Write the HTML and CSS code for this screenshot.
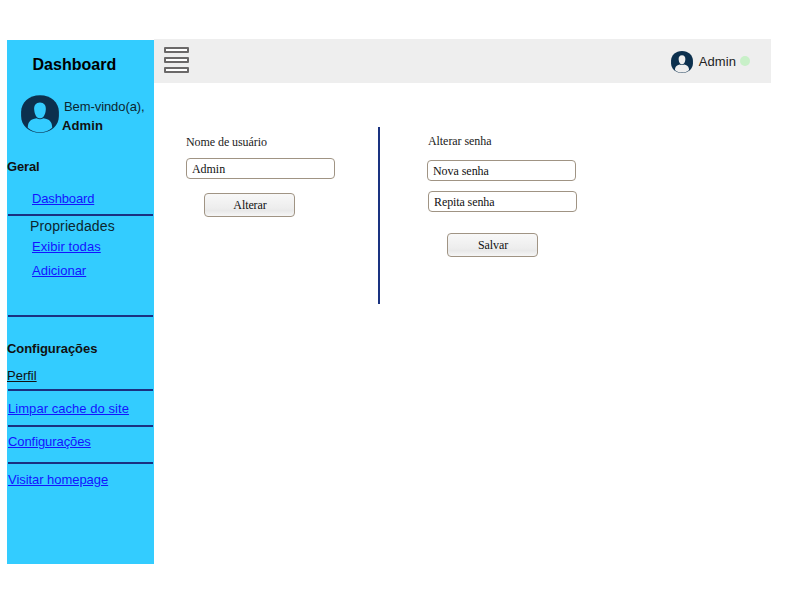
FILE: index.html
```html
<!DOCTYPE html>
<html lang="pt-BR">
<head>
<meta charset="utf-8">
<title>Dashboard - Perfil</title>
<link rel="stylesheet" href="styles.css">
</head>
<body>
<svg width="0" height="0" class="defs" aria-hidden="true">
  <symbol id="avatar" viewBox="0 0 38 38">
    <path fill="#0c304e" d="M19 .2C30 .2 37.900 7.500 37.900 17v4c0 9.500-7.900 16.800-18.900 16.800S.1 30.500.1 21v-4C.1 7.500 8 .2 19 .2z"/>
    <path class="person" d="M19 7.500c4 0 6.200 2.900 5.800 7.200-.4 4.900-2.400 8.600-5.800 8.600s-5.400-3.700-5.800-8.600C12.800 10.400 15 7.500 19 7.500z"/>
    <path class="person" d="M6.800 32.800c0-4.800 2-7.700 5.700-8.700l3-.8c2.200 1.200 4.800 1.200 7 0l3 .8c3.700 1 5.700 3.900 5.700 8.700-3.400 3-7.500 4.500-12.200 4.500s-8.800-1.500-12.200-4.500z"/>
  </symbol>
</svg>
<div class="app">
  <aside class="sidebar">
    <h1 class="brand">Dashboard</h1>
    <div class="profile">
      <svg class="avatar"><use href="#avatar"/></svg>
      <div class="welcome"><span class="hello">Bem-vindo(a),</span><strong class="name">Admin</strong></div>
    </div>
    <h2 class="section general">Geral</h2>
    <a class="link sub dash" href="#">Dashboard</a>
    <hr class="rule r1">
    <p class="group">Propriedades</p>
    <a class="link sub all" href="#">Exibir todas</a>
    <a class="link sub add" href="#">Adicionar</a>
    <hr class="rule r2">
    <h2 class="section settings">Configurações</h2>
    <a class="link current" href="#">Perfil</a>
    <hr class="rule r3">
    <a class="link cache" href="#">Limpar cache do site</a>
    <hr class="rule r4">
    <a class="link config" href="#">Configurações</a>
    <hr class="rule r5">
    <a class="link home" href="#">Visitar homepage</a>
  </aside>
  <div class="main">
    <header class="topbar">
      <div class="menu"><i></i><i></i><i></i></div>
      <div class="user">
        <svg class="avatar small"><use href="#avatar"/></svg>
        <span class="username">Admin</span>
        <span class="status"></span>
      </div>
    </header>
    <main class="content">
      <form class="form user-form">
        <label class="label" for="user">Nome de usuário</label>
        <input class="field" id="user" value="Admin">
        <button class="button" type="button">Alterar</button>
      </form>
      <form class="form pass-form">
        <label class="label" for="pass">Alterar senha</label>
        <input class="field" id="pass" value="Nova senha">
        <input class="field repeat" value="Repita senha">
        <button class="button save" type="button">Salvar</button>
      </form>
    </main>
  </div>
</div>
</body>
</html>
```
FILE: styles.css
```css
* { box-sizing: border-box; }
body { margin: 0; background: #fff; font: 13px/16px "Liberation Sans", Arial, sans-serif; color: #111; }
h1, h2, p { margin: 0; }
.defs { display: block; }
.app { display: flex; align-items: flex-start; padding: 39px 23px 0 7px; }

.sidebar { width: 147px; height: 524.4px; margin-top: 1px; padding-top: 16px; background: #3cf; flex: none; white-space: nowrap; }
.brand { margin-left: 25.5px; font-size: 16px; line-height: 18px; letter-spacing: .03px; color: #000; }
.profile { display: flex; height: 38px; margin: 21px 0 0 14px; }
.avatar { width: 38px; height: 38px; flex: none; fill: #3cf; }
.welcome { display: flex; flex-direction: column; padding-top: 4px; }
.hello { margin-left: 5px; letter-spacing: -.08px; color: #0c2630; }
.name { margin: 3px 0 0 3px; letter-spacing: .1px; }
.section { font-size: 13px; line-height: 16px; }
.general { margin-top: 26px; letter-spacing: -.15px; }
.settings { margin-top: 24px; letter-spacing: -.05px; }
.link { display: block; width: max-content; margin-left: 1px; color: #1414ff; text-decoration: underline; }
.sub { margin-left: 25px; }
.dash { margin-top: 16px; letter-spacing: -.15px; }
.group { margin: 2px 0 0 23px; font-size: 14px; letter-spacing: .13px; color: #0c2630; }
.all { margin-top: 5px; letter-spacing: .07px; }
.add { margin-top: 8px; }
.current { margin: 11px 0 0; color: #111; }
.cache { margin-top: 10px; letter-spacing: .05px; }
.config { margin-top: 7px; letter-spacing: -.08px; }
.home { margin-top: 8px; letter-spacing: -.05px; }
.rule { height: 2px; margin: 0 1px; border: 0; background: #1a3080; }
.r1 { margin-top: 7px; }
.r2 { margin-top: 36px; }
.r3 { margin-top: 5px; }
.r4 { margin-top: 8px; }
.r5 { margin-top: 12px; }

.main { flex: 1; }
.topbar { display: flex; justify-content: space-between; height: 44px; padding: 8px 21px 0 10px; background: #eee; }
.menu { display: flex; flex-direction: column; gap: 4px; }
.menu i { width: 25px; height: 6px; border: 2px solid #6b6969; border-radius: 1px; background: #fff; }
.user { display: flex; height: 30px; align-items: center; }
.small { width: 22px; height: 22px; fill: #eee; }
.username { margin: 0 4px 0 6px; letter-spacing: .1px; color: #222; }
.status { width: 10px; height: 10px; margin-top: -3px; border-radius: 50%; background: #c8f0c8; }

.content { display: flex; padding: 44px 0 0 32px; font: 12px/16px "Liberation Serif", "Times New Roman", serif; }
.form { display: flex; flex-direction: column; align-items: flex-start; height: 177px; }
.user-form { width: 194px; padding-top: 7px; border-right: 2px solid #1a3280; }
.pass-form { padding: 6px 0 0 47px; }
.label { letter-spacing: -.07px; color: #222; }
.pass-form .label { margin-left: 1px; }
.field { width: 149px; height: 21px; margin-top: 8px; padding: 1px 5px 0; border: 1px solid #a09484; border-radius: 4px; background: #fff; font: inherit; letter-spacing: -.05px; color: #111; }
.pass-form .field { margin-top: 11px; }
.pass-form .repeat { margin: 10px 0 0 1px; letter-spacing: -.1px; }
.button { width: 91px; height: 24px; margin: 14px 0 0 18px; padding: 0 0 0 1px; border: 1px solid #a09484; border-radius: 4px; background: linear-gradient(#f8f8f8 0%, #ededed 65%, #e9e9e9 75%, #f6f6f6 100%); font: inherit; letter-spacing: -.1px; color: #111; }
.save { margin: 21px 0 0 20px; }
```
